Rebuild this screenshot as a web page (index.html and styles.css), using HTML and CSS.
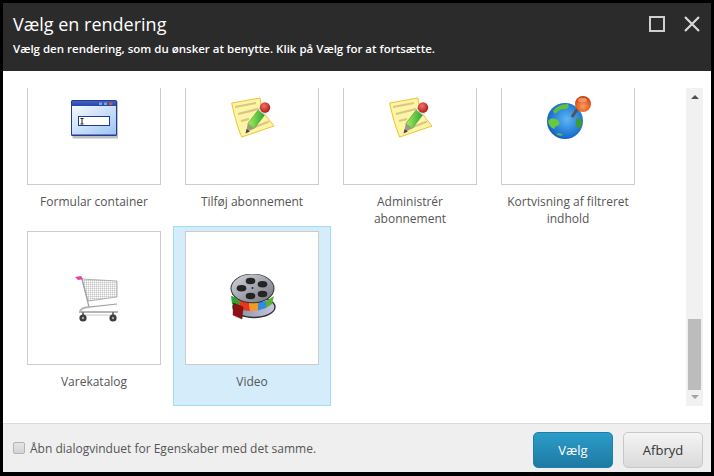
FILE: index.html
```html
<!DOCTYPE html>
<html lang="da">
<head>
<meta charset="utf-8">
<title>Vælg en rendering</title>
<link rel="stylesheet" href="styles.css">
</head>
<body>
<svg class="defs" width="0" height="0" aria-hidden="true">
  <defs>
    <linearGradient id="win" x1="0" y1="0" x2="1" y2="1"><stop offset="0" stop-color="#f6faff"/><stop offset="1" stop-color="#9cc4f4"/></linearGradient>
    <linearGradient id="tbar" x1="0" y1="0" x2="0" y2="1"><stop offset="0" stop-color="#3f63c8"/><stop offset="1" stop-color="#2a46a8"/></linearGradient>
    <linearGradient id="pencil" x1="0" y1="0" x2="1" y2="0"><stop offset="0" stop-color="#a8ee5c"/><stop offset="1" stop-color="#22a030"/></linearGradient>
    <radialGradient id="eraser" cx=".4" cy=".35" r=".7"><stop offset="0" stop-color="#f0706a"/><stop offset="1" stop-color="#b01810"/></radialGradient>
    <radialGradient id="sea" cx=".55" cy=".45" r=".65"><stop offset="0" stop-color="#5bb8f4"/><stop offset=".75" stop-color="#1b6fd0"/><stop offset="1" stop-color="#1040a0"/></radialGradient>
    <radialGradient id="pin" cx=".5" cy=".65" r=".65"><stop offset="0" stop-color="#f8a060"/><stop offset=".7" stop-color="#e2581c"/><stop offset="1" stop-color="#b83c10"/></radialGradient>
    <linearGradient id="disc" x1="0" y1="0" x2="1" y2="1"><stop offset="0" stop-color="#d4d4dc"/><stop offset=".5" stop-color="#a4a4ae"/><stop offset="1" stop-color="#74747e"/></linearGradient>
    <linearGradient id="disc2" x1="0" y1="0" x2="1" y2="0"><stop offset="0" stop-color="#8a8a9a"/><stop offset="1" stop-color="#c8c8e4"/></linearGradient>
    <symbol id="note" viewBox="0 0 48 48">
      <path d="M3.7 9 L32 4 L34 17 L46 32 L13.7 43 Q8 30 3.7 9 Z" fill="#fdf5a6" stroke="#efc22e" stroke-width="1"/>
      <path d="M7 13 L28 9 M10 20 L30 15 M13 27 L21 25 M27 33 L41 27.5" stroke="#dcc582" stroke-width="2.2" fill="none"/>
      <path d="M16 38 L32 41" stroke="#d8d4c8" stroke-width="0"/>
      <path d="M19.8 29.5 L31.8 14 L38.2 19 L26.2 34.5 Z" fill="url(#pencil)" stroke="#2a8a2a" stroke-width=".5"/>
      <path d="M18 38.5 L19.8 29.5 L26.2 34.5 Z" fill="#a09a7c"/>
      <path d="M17.5 39.5 L18.6 35 L21.8 37.5 Z" fill="#444"/>
      <path d="M31 15 L38 20.5" stroke="#e4e4de" stroke-width="2.4"/>
      <circle cx="37" cy="13.5" r="5.2" fill="url(#eraser)"/>
    </symbol>
  </defs>
</svg>
<main class="dialog">
  <header class="head">
    <div class="head-text">
      <h1 class="title">Vælg en rendering</h1>
      <p class="subtitle">Vælg den rendering, som du ønsker at benytte. Klik på Vælg for at fortsætte.</p>
    </div>
    <div class="win-actions">
      <span class="maximize"></span>
      <svg class="close" width="16" height="16" viewBox="0 0 16 16"><path d="M1 1 L15 15 M15 1 L1 15" stroke="#d8d8d8" stroke-width="2.2" fill="none"/></svg>
    </div>
  </header>
  <section class="content">
    <div class="viewport">
      <div class="grid">
        <div class="item">
          <div class="thumb">
            <svg width="48" height="48" viewBox="0 0 48 48">
              <rect x="2.5" y="7.5" width="46" height="37" rx="1" fill="#8a8a90" opacity=".55"/>
              <rect x="1" y="6" width="46" height="36" rx="1.5" fill="#243a96"/>
              <rect x="2" y="7" width="44" height="5" fill="url(#tbar)"/>
              <rect x="29" y="8.5" width="3" height="2.5" fill="#7f9fe0"/>
              <rect x="34" y="8.5" width="3" height="2.5" fill="#7f9fe0"/>
              <rect x="39" y="8.5" width="3.4" height="2.5" fill="#d4562e"/>
              <rect x="2" y="12" width="44" height="28.5" fill="url(#win)"/>
              <rect x="8.5" y="22.5" width="31" height="9" fill="#fff" stroke="#26378f" stroke-width="1"/>
              <path d="M10.5 24.5 H13.5 M12 24.5 V30 M10.5 30 H13.5" stroke="#222" stroke-width="1" fill="none"/>
            </svg>
          </div>
          <div class="label">Formular container</div>
        </div>
        <div class="item">
          <div class="thumb"><svg width="48" height="48"><use href="#note"/></svg></div>
          <div class="label">Tilføj abonnement</div>
        </div>
        <div class="item">
          <div class="thumb"><svg width="48" height="48"><use href="#note"/></svg></div>
          <div class="label">Administrér abonnement</div>
        </div>
        <div class="item">
          <div class="thumb">
            <svg width="48" height="48" viewBox="0 0 48 48">
              <circle cx="21" cy="27" r="18" fill="url(#sea)"/>
              <path d="M9 17 Q14 10 24 10 L25 13 Q21 16 18 15 Q13 17 11 20 Z" fill="#5fc03c"/>
              <path d="M4 27 Q6 23 12 25 Q17 27 15 31 Q11 32 10 35 Q5 33 4 27 Z" fill="#6ac83e"/>
              <path d="M12 40 Q16 38 19 41 Q16 43 12 40 Z" fill="#5fc03c"/>
              <path d="M32 25 Q36 22 38 28 Q38 33 34 35 Q31 31 32 25 Z" fill="#3f9a38"/>
              <path d="M28 23 L34 14" stroke="#55504c" stroke-width="2.8"/>
              <circle cx="39" cy="10" r="8" fill="url(#pin)"/>
              <ellipse cx="38.5" cy="6" rx="4.5" ry="2.2" fill="#f6c0a0" opacity=".55"/>
            </svg>
          </div>
          <div class="label">Kortvisning af filtreret indhold</div>
        </div>
        <div class="item">
          <div class="thumb">
            <svg width="48" height="48" viewBox="0 0 48 48">
              <defs><pattern id="mesh" width="2" height="2" patternUnits="userSpaceOnUse"><path d="M0 0 H2 M0 0 V2" stroke="#a2a2a2" stroke-width=".7"/></pattern></defs>
              <path d="M12 5 L47 7 L47 23 L18 27 Z" fill="url(#mesh)" stroke="#a0a0a0" stroke-width=".8"/>
              <path d="M8 5 L12 5 L19 33 L47 30" stroke="#a0a0a0" stroke-width="1.2" fill="none"/>
              <path d="M5 3 L11 2 L13 5 L8 6 Z" fill="#ee3fa4"/>
              <path d="M19 33 Q10 34 10 38 L48 38" stroke="#b4b4b4" stroke-width="2" fill="none"/>
              <path d="M14 41 L46 41" stroke="#c8c8c8" stroke-width="1"/>
              <path d="M13 38 V41 M43 38 V41" stroke="#777" stroke-width="2"/>
              <circle cx="13" cy="44" r="3.6" fill="#3c3c3c"/><circle cx="13" cy="44" r="1.2" fill="#aaa"/>
              <circle cx="43" cy="44" r="3.6" fill="#3c3c3c"/><circle cx="43" cy="44" r="1.2" fill="#aaa"/>
            </svg>
          </div>
          <div class="label">Varekatalog</div>
        </div>
        <div class="item selected">
          <div class="thumb">
            <svg width="48" height="48" viewBox="0 0 48 48">
              <ellipse cx="26" cy="33" rx="21" ry="10.5" fill="url(#disc2)" stroke="#333" stroke-width="1.4"/>
              <path d="M3 22 L4 30 L9 33 L8 24 Z" fill="#2aa82e"/>
              <path d="M4 22 L8 33 L12 36 L11 26 Z" fill="#2aa82e"/>
              <path d="M11 26 L12 36 L22 37 L21 28 Z" fill="#e8381c"/>
              <path d="M21 28 L22 37 L30 36.5 L30 28.5 Z" fill="#f29a28"/>
              <path d="M30 28.5 L30 36.5 L38 34 L38 27 Z" fill="#2f8ce0"/>
              <path d="M38 27 L38 34 L44 30 L46 22 Z" fill="#5cb030"/>
              <ellipse cx="24.5" cy="14.5" rx="22" ry="14.8" fill="#333"/>
              <ellipse cx="24.5" cy="14.3" rx="21" ry="14" fill="url(#disc)"/>
              <ellipse cx="22.5" cy="7" rx="4.8" ry="3.2" fill="#242424"/>
              <ellipse cx="34.5" cy="10.3" rx="4.8" ry="3.2" fill="#242424"/>
              <ellipse cx="34.5" cy="20" rx="4.8" ry="3.2" fill="#242424"/>
              <ellipse cx="22.5" cy="22" rx="4.8" ry="3.2" fill="#242424"/>
              <ellipse cx="13.5" cy="14.3" rx="4.8" ry="3.2" fill="#242424"/>
              <circle cx="24.5" cy="14" r="1" fill="#242424"/>
              <path d="M5.5 29 L15 33 L14 45 L5 41 Z" fill="#8c1014" stroke="#5a0a0a" stroke-width=".5"/>
            </svg>
          </div>
          <div class="label">Video</div>
        </div>
      </div>
    </div>
    <div class="scrollbar">
      <span class="arrow up"></span>
      <span class="track"><span class="bar"></span></span>
      <span class="arrow down"></span>
    </div>
  </section>
  <footer class="foot">
    <label class="check"><span class="box"></span>Åbn dialogvinduet for Egenskaber med det samme.</label>
    <div class="buttons">
      <button class="btn primary" type="button">Vælg</button>
      <button class="btn" type="button">Afbryd</button>
    </div>
  </footer>
</main>
</body>
</html>
```

FILE: styles.css
```css
* { box-sizing: border-box; }
html, body { margin: 0; height: 100%; }
body {
  background: #000;
  font-family: "Open Sans", sans-serif;
  padding: 3px 3px 4px;
  overflow: hidden;
}
.defs { position: absolute; }
.dialog {
  height: 469px;
  display: flex;
  flex-direction: column;
  background: #fff;
}
.head {
  height: 68px;
  flex: none;
  background: #2b2b2b;
  color: #fff;
  display: flex;
  justify-content: space-between;
  padding: 9px 11px 0 10px;
}
.title {
  margin: 0;
  font-size: 18px;
  font-weight: 400;
  line-height: 25px;
}
.subtitle {
  margin: 3px 0 0;
  font-size: 11.5px;
  font-weight: 600;
  line-height: 17px;
}
.win-actions {
  display: flex;
  gap: 19px;
  padding-top: 4px;
  align-items: flex-start;
}
.maximize {
  width: 16px;
  height: 16px;
  border: 2px solid #d0d0d0;
}
.close { display: block; }
.content {
  flex: 1;
  min-height: 0;
  display: flex;
  padding: 17px 8px 17px 12px;
}
.viewport {
  flex: 1;
  min-width: 0;
  overflow: hidden;
}
.grid {
  margin-top: -42px;
  display: grid;
  grid-template-columns: repeat(4, 158px);
  grid-auto-rows: 180px;
}
.item {
  border: 1px solid transparent;
  padding: 4px 11px 0;
  text-align: center;
}
.item.selected {
  background: #d5edfb;
  border-color: #9fdcf8;
}
.thumb {
  width: 134px;
  height: 134px;
  background: #fff;
  border: 1px solid #ccc;
  display: flex;
  align-items: center;
  justify-content: center;
}
.thumb svg { display: block; }
.label {
  margin-top: 8px;
  font-size: 12px;
  line-height: 17px;
  color: #555;
}
.scrollbar {
  width: 17px;
  flex: none;
  background: #f1f1f1;
  display: flex;
  flex-direction: column;
  align-items: center;
}
.arrow {
  flex: none;
  width: 0;
  height: 0;
  border-left: 4px solid transparent;
  border-right: 4px solid transparent;
}
.arrow.up { border-bottom: 4px solid #505050; margin: 7px 0 0; }
.arrow.down { border-top: 4px solid #a3a3a3; margin: 5px 0 7px; }
.track {
  flex: 1;
  width: 100%;
  display: flex;
  flex-direction: column;
  justify-content: flex-end;
  align-items: center;
}
.bar {
  display: block;
  width: 13px;
  height: 71px;
  background: #bcbcbc;
}
.foot {
  height: 49px;
  flex: none;
  background: #efefef;
  border-top: 1px solid #dcdcdc;
  display: flex;
  align-items: center;
  justify-content: space-between;
  padding: 0 8px 0 10px;
}
.check {
  display: flex;
  align-items: center;
  gap: 5px;
  font-size: 12px;
  color: #555;
}
.box {
  width: 12px;
  height: 12px;
  border: 1px solid #b4b4b4;
  border-radius: 2px;
  background: linear-gradient(#e4e4e4, #d4d4d4);
}
.buttons {
  display: flex;
  gap: 10px;
  padding-top: 4px;
}
.btn {
  width: 80px;
  height: 36px;
  padding: 0;
  font: 400 13px "Open Sans", sans-serif;
  color: #333;
  border: 1px solid #c8c8c8;
  border-radius: 5px;
  background: linear-gradient(#f4f4f4, #dadada);
}
.btn.primary {
  color: #fff;
  border-color: #1f7fab;
  background: linear-gradient(#2b9cc9, #1e7aa2);
}
```
